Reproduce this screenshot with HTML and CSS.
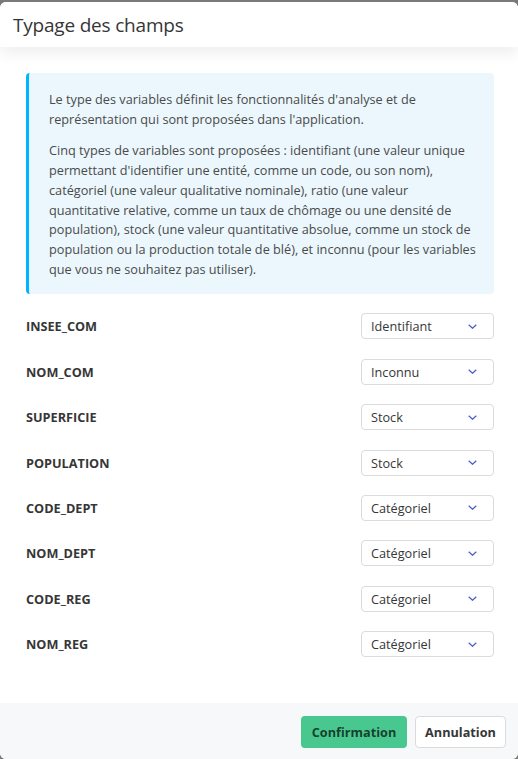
FILE: index.html
```html
<!DOCTYPE html>
<html lang="fr">
<head>
<meta charset="utf-8">
<title>Typage des champs</title>
<link rel="stylesheet" href="styles.css">
</head>
<body>
<div class="modal">
  <header class="modal-head">
    <h1 class="modal-title">Typage des champs</h1>
  </header>
  <section class="modal-body">
    <div class="notice">
      <p>Le type des variables définit les fonctionnalités d'analyse et de représentation qui sont proposées dans l'application.</p>
      <p>Cinq types de variables sont proposées : identifiant (une valeur unique permettant d'identifier une entité, comme un code, ou son nom), catégoriel (une valeur qualitative nominale), ratio (une valeur quantitative relative, comme un taux de chômage ou une densité de population), stock (une valeur quantitative absolue, comme un stock de population ou la production totale de blé), et inconnu (pour les variables que vous ne souhaitez pas utiliser).</p>
    </div>
    <div class="fields">
      <div class="field"><span class="field-name">INSEE_COM</span><div class="select"><span>Identifiant</span><svg class="chev" viewBox="0 0 9 5" width="9" height="5"><path d="M0.7 0.7 L4.5 4.3 L8.3 0.7" /></svg></div></div>
      <div class="field"><span class="field-name">NOM_COM</span><div class="select"><span>Inconnu</span><svg class="chev" viewBox="0 0 9 5" width="9" height="5"><path d="M0.7 0.7 L4.5 4.3 L8.3 0.7" /></svg></div></div>
      <div class="field"><span class="field-name">SUPERFICIE</span><div class="select"><span>Stock</span><svg class="chev" viewBox="0 0 9 5" width="9" height="5"><path d="M0.7 0.7 L4.5 4.3 L8.3 0.7" /></svg></div></div>
      <div class="field"><span class="field-name">POPULATION</span><div class="select"><span>Stock</span><svg class="chev" viewBox="0 0 9 5" width="9" height="5"><path d="M0.7 0.7 L4.5 4.3 L8.3 0.7" /></svg></div></div>
      <div class="field"><span class="field-name">CODE_DEPT</span><div class="select"><span>Catégoriel</span><svg class="chev" viewBox="0 0 9 5" width="9" height="5"><path d="M0.7 0.7 L4.5 4.3 L8.3 0.7" /></svg></div></div>
      <div class="field"><span class="field-name">NOM_DEPT</span><div class="select"><span>Catégoriel</span><svg class="chev" viewBox="0 0 9 5" width="9" height="5"><path d="M0.7 0.7 L4.5 4.3 L8.3 0.7" /></svg></div></div>
      <div class="field"><span class="field-name">CODE_REG</span><div class="select"><span>Catégoriel</span><svg class="chev" viewBox="0 0 9 5" width="9" height="5"><path d="M0.7 0.7 L4.5 4.3 L8.3 0.7" /></svg></div></div>
      <div class="field"><span class="field-name">NOM_REG</span><div class="select"><span>Catégoriel</span><svg class="chev" viewBox="0 0 9 5" width="9" height="5"><path d="M0.7 0.7 L4.5 4.3 L8.3 0.7" /></svg></div></div>
    </div>
  </section>
  <footer class="modal-foot">
    <button class="btn btn-success" type="button">Confirmation</button>
    <button class="btn btn-cancel" type="button">Annulation</button>
  </footer>
</div>
</body>
</html>
```
FILE: styles.css
```css
* { box-sizing: border-box; }
html, body { margin: 0; padding: 0; }
body {
  background: #7a7a7a;
  font-family: "Open Sans", "Noto Sans", sans-serif;
  color: #4a4a4a;
  width: 518px;
  height: 759px;
  overflow: hidden;
}
.modal {
  margin-top: 2px;
  height: 757px;
  background: #fff;
  border-radius: 6px;
  display: flex;
  flex-direction: column;
  overflow: hidden;
}
.modal-head {
  height: 45px;
  flex: none;
  padding: 0 13px;
  display: flex;
  align-items: center;
  background: #fff;
  box-shadow: 0 6px 14px rgba(0,0,0,0.07);
  position: relative;
  z-index: 1;
}
.modal-title {
  margin: 0;
  font-size: 19px;
  font-weight: 400;
  color: #363636;
  letter-spacing: -0.2px;
}
.modal-body {
  flex: 1;
  padding: 26px 24px 0 26px;
}
.notice {
  background: #ebf7fd;
  border-left: 3px solid #00b4ff;
  border-radius: 4px;
  padding: 17px 16px 15px 20px;
  font-size: 12.7px;
  line-height: 19.7px;
  color: #4a4a4a;
}
.notice p { margin: 0 0 12px 0; }
.notice p:last-child { margin-bottom: 0; }
.fields {
  margin-top: 19px;
  display: flex;
  flex-direction: column;
  gap: 19.4px;
}
.field {
  display: flex;
  align-items: center;
  justify-content: space-between;
  height: 26px;
}
.field-name {
  font-weight: 700;
  font-size: 12.7px;
  color: #363636;
}
.select {
  width: 133px;
  height: 26px;
  border: 1px solid #dbdbdb;
  border-radius: 4px;
  display: flex;
  align-items: center;
  justify-content: space-between;
  padding: 0 16px 0 9px;
  font-size: 12.7px;
  color: #363636;
  background: #fff;
}
.chev { fill: none; stroke: #485fc7; stroke-width: 1.2; }
.modal-foot {
  height: 56px;
  flex: none;
  background: #f7f8fa;
  display: flex;
  justify-content: flex-end;
  align-items: flex-start;
  gap: 8px;
  padding: 13px 12px 0 0;
}
.btn {
  font-family: inherit;
  height: 32px;
  padding: 0;
  border-radius: 4px;
  border: 1px solid #dbdbdb;
  background: #fff;
  color: #363636;
  font-weight: 700;
  font-size: 12.7px;
  text-align: center;
}
.btn-success {
  width: 106px;
  background: #48c78e;
  border-color: transparent;
  color: rgba(0,0,0,0.7);
}
.btn-cancel { width: 91px; }
```
